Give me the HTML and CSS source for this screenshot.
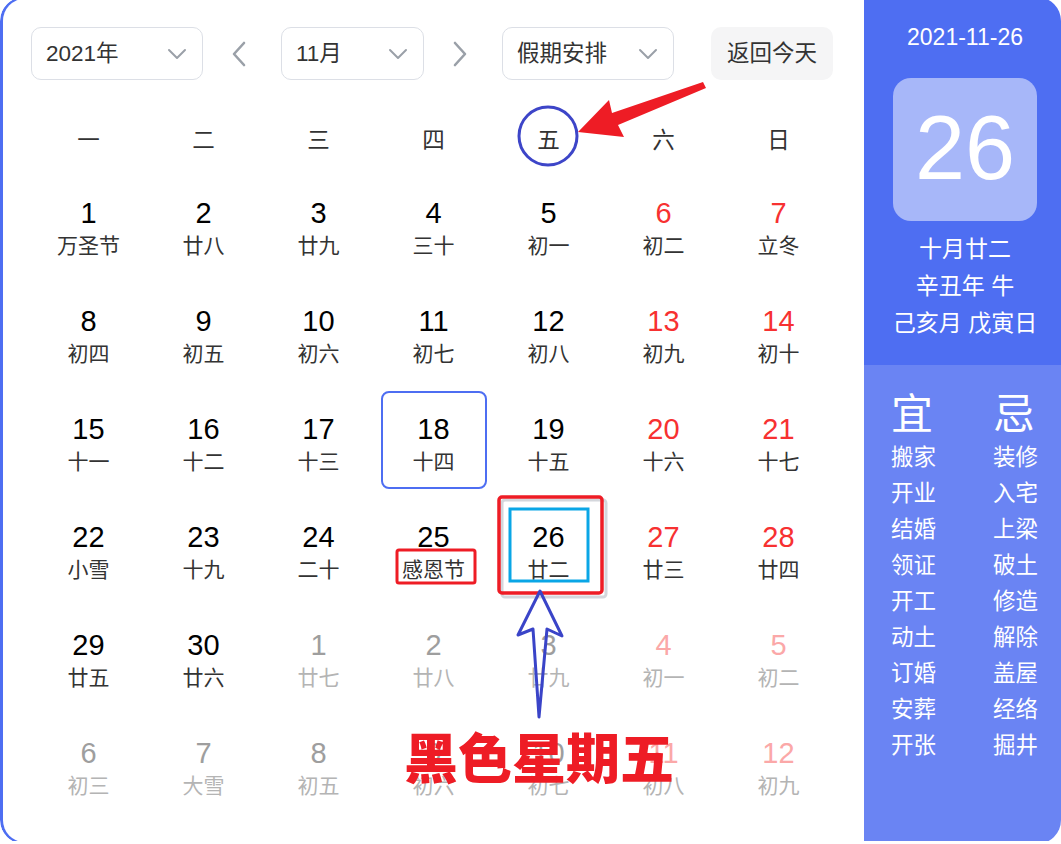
FILE: index.html
```html
<!DOCTYPE html>
<html lang="zh-CN">
<head>
<meta charset="utf-8">
<title>万年历</title>
<link rel="stylesheet" href="styles.css">
</head>
<body>
<div class="page">
  <div class="card">
    <div class="main">
      <div class="toolbar">
        <div class="select sel-year"><span>2021年</span><svg class="chev" width="20" height="12" viewBox="0 0 20 12"><path d="M2 2 L10 10 L18 2"/></svg></div>
        <div class="nav"><svg width="16" height="26" viewBox="0 0 16 26"><path d="M13 2 L3 13 L13 24"/></svg></div>
        <div class="select sel-month"><span>11月</span><svg class="chev" width="20" height="12" viewBox="0 0 20 12"><path d="M2 2 L10 10 L18 2"/></svg></div>
        <div class="nav"><svg width="16" height="26" viewBox="0 0 16 26"><path d="M3 2 L13 13 L3 24"/></svg></div>
        <div class="select sel-holiday"><span>假期安排</span><svg class="chev" width="20" height="12" viewBox="0 0 20 12"><path d="M2 2 L10 10 L18 2"/></svg></div>
        <div class="today-btn"><span>返回今天</span></div>
      </div>

      <div class="week">
        <div>一</div><div>二</div><div>三</div><div>四</div><div>五</div><div>六</div><div>日</div>
      </div>

      <div class="days">
        <div class="cell"><span class="num">1</span><span class="lunar">万圣节</span></div>
        <div class="cell"><span class="num">2</span><span class="lunar">廿八</span></div>
        <div class="cell"><span class="num">3</span><span class="lunar">廿九</span></div>
        <div class="cell"><span class="num">4</span><span class="lunar">三十</span></div>
        <div class="cell"><span class="num">5</span><span class="lunar">初一</span></div>
        <div class="cell weekend"><span class="num">6</span><span class="lunar">初二</span></div>
        <div class="cell weekend"><span class="num">7</span><span class="lunar">立冬</span></div>

        <div class="cell"><span class="num">8</span><span class="lunar">初四</span></div>
        <div class="cell"><span class="num">9</span><span class="lunar">初五</span></div>
        <div class="cell"><span class="num">10</span><span class="lunar">初六</span></div>
        <div class="cell"><span class="num">11</span><span class="lunar">初七</span></div>
        <div class="cell"><span class="num">12</span><span class="lunar">初八</span></div>
        <div class="cell weekend"><span class="num">13</span><span class="lunar">初九</span></div>
        <div class="cell weekend"><span class="num">14</span><span class="lunar">初十</span></div>

        <div class="cell"><span class="num">15</span><span class="lunar">十一</span></div>
        <div class="cell"><span class="num">16</span><span class="lunar">十二</span></div>
        <div class="cell"><span class="num">17</span><span class="lunar">十三</span></div>
        <div class="cell selected"><span class="num">18</span><span class="lunar">十四</span></div>
        <div class="cell"><span class="num">19</span><span class="lunar">十五</span></div>
        <div class="cell weekend"><span class="num">20</span><span class="lunar">十六</span></div>
        <div class="cell weekend"><span class="num">21</span><span class="lunar">十七</span></div>

        <div class="cell"><span class="num">22</span><span class="lunar">小雪</span></div>
        <div class="cell"><span class="num">23</span><span class="lunar">十九</span></div>
        <div class="cell"><span class="num">24</span><span class="lunar">二十</span></div>
        <div class="cell"><span class="num">25</span><span class="lunar">感恩节</span></div>
        <div class="cell"><span class="num">26</span><span class="lunar">廿二</span></div>
        <div class="cell weekend"><span class="num">27</span><span class="lunar">廿三</span></div>
        <div class="cell weekend"><span class="num">28</span><span class="lunar">廿四</span></div>

        <div class="cell"><span class="num">29</span><span class="lunar">廿五</span></div>
        <div class="cell"><span class="num">30</span><span class="lunar">廿六</span></div>
        <div class="cell other"><span class="num">1</span><span class="lunar">廿七</span></div>
        <div class="cell other"><span class="num">2</span><span class="lunar">廿八</span></div>
        <div class="cell other"><span class="num">3</span><span class="lunar">廿九</span></div>
        <div class="cell other weekend"><span class="num">4</span><span class="lunar">初一</span></div>
        <div class="cell other weekend"><span class="num">5</span><span class="lunar">初二</span></div>

        <div class="cell other"><span class="num">6</span><span class="lunar">初三</span></div>
        <div class="cell other"><span class="num">7</span><span class="lunar">大雪</span></div>
        <div class="cell other"><span class="num">8</span><span class="lunar">初五</span></div>
        <div class="cell other"><span class="num">9</span><span class="lunar">初六</span></div>
        <div class="cell other"><span class="num">10</span><span class="lunar">初七</span></div>
        <div class="cell other weekend"><span class="num">11</span><span class="lunar">初八</span></div>
        <div class="cell other weekend"><span class="num">12</span><span class="lunar">初九</span></div>
      </div>
    </div>

    <aside class="side">
      <div class="side-top">
        <div class="side-date">2021-11-26</div>
        <div class="big-day">26</div>
        <div class="side-lunar">
          <div>十月廿二</div>
          <div>辛丑年 牛</div>
          <div>己亥月 戊寅日</div>
        </div>
      </div>
      <div class="side-bottom">
        <div class="yiji">
          <div class="col">
            <div class="head">宜</div>
            <div>搬家</div><div>开业</div><div>结婚</div><div>领证</div><div>开工</div><div>动土</div><div>订婚</div><div>安葬</div><div>开张</div>
          </div>
          <div class="col">
            <div class="head">忌</div>
            <div>装修</div><div>入宅</div><div>上梁</div><div>破土</div><div>修造</div><div>解除</div><div>盖屋</div><div>经络</div><div>掘井</div>
          </div>
        </div>
      </div>
    </aside>
  </div>

  <svg class="annot" width="1061" height="844" viewBox="0 0 1061 844">
    <circle cx="548" cy="139" r="29" fill="none" stroke="#3d45c8" stroke-width="3"/>
    <polygon points="578,135 609,103 612,116 703,85 706,91 618,128 624,140" fill="#ee1c25"/>
    <rect x="397" y="553" width="78" height="33" rx="2" fill="none" stroke="#ee1c25" stroke-width="3"/>
    <rect x="502" y="503" width="104" height="97" rx="3" fill="none" stroke="#b8bcc4" stroke-width="3" opacity="0.6"/>
    <rect x="499" y="500" width="103" height="96" rx="3" fill="none" stroke="#ee1c25" stroke-width="3.5"/>
    <rect x="510" y="512" width="78" height="72" fill="none" stroke="#0aa6e6" stroke-width="3"/>
    <polygon points="540,594 562,639 547,632 539,720 533,632 518,638" fill="none" stroke="#3a44c8" stroke-width="3" stroke-linejoin="round"/>
  </svg>
  <div class="annot-text">黑色星期五</div>
</div>
</body>
</html>
```

FILE: styles.css
```css
* { box-sizing: border-box; }

html, body {
  margin: 0;
  padding: 0;
  background: #ffffff;
  overflow: hidden;
}

body {
  font-family: "Liberation Sans", Arial, "Noto Sans CJK SC", sans-serif;
  color: #333333;
}

.page {
  position: relative;
  width: 1061px;
  height: 844px;
}

.card {
  display: flex;
  width: 1061px;
  height: 847px;
  margin-top: -3px;
  border-radius: 24px;
  overflow: hidden;
  background: #ffffff;
}

.main {
  width: 864px;
  flex: none;
  border-left: 3px solid #4e6ef2;
  border-top: 2px solid #4e6ef2;
  border-bottom: 2px solid #4e6ef2;
  border-radius: 24px 0 0 24px;
  padding: 28px 0 0 28px;
  background: #ffffff;
}

/* toolbar */
.toolbar {
  display: flex;
  align-items: center;
  height: 53px;
}

.select {
  height: 53px;
  border: 1px solid #dcdfe6;
  border-radius: 10px;
  display: flex;
  align-items: center;
  justify-content: space-between;
  padding: 0 15px 0 14px;
  font-size: 22.5px;
  color: #333333;
  background: #ffffff;
}

.select span,
.today-btn span {
  line-height: 1;
  padding-top: 2px;
}

.sel-year { width: 172px; }
.sel-month { width: 143px; }
.sel-holiday { width: 172px; }

.chev path,
.nav path {
  fill: none;
  stroke: #9aa0a8;
  stroke-width: 2;
  stroke-linecap: round;
  stroke-linejoin: round;
}

.nav path { stroke-width: 2.6; }

.nav {
  width: 78px;
  height: 53px;
  display: flex;
  align-items: center;
  justify-content: center;
  padding-right: 6px;
}

.today-btn {
  margin-left: 37px;
  width: 122px;
  height: 53px;
  border-radius: 10px;
  background: #f5f5f6;
  display: flex;
  align-items: center;
  justify-content: center;
  font-size: 22.5px;
  color: #333333;
}

/* week header */
.week {
  display: grid;
  grid-template-columns: repeat(7, 115px);
  height: 60px;
  margin-top: 30px;
  padding-bottom: 4px;
  align-items: center;
  font-size: 22.5px;
  color: #333333;
  text-align: center;
}

/* days */
.days {
  display: grid;
  grid-template-columns: repeat(7, 115px);
  grid-auto-rows: 108px;
}

.cell {
  margin: 5px 4.5px;
  border: 2px solid transparent;
  border-radius: 8px;
  display: flex;
  flex-direction: column;
  align-items: center;
  padding-top: 19px;
}

.cell .num {
  font-size: 29px;
  line-height: 34px;
  color: #000000;
}

.cell .lunar {
  font-size: 21px;
  line-height: 32px;
  color: #333333;
}

.cell.weekend .num { color: #f73131; }

.cell.other .num { color: #9e9e9e; }
.cell.other .lunar { color: #b4b4b4; }
.cell.other.weekend .num { color: #fba8a8; }

.cell.selected {
  border-color: #4e6ef2;
}

/* side panel */
.side {
  flex: 1;
  display: flex;
  flex-direction: column;
  color: #ffffff;
}

.side-top {
  background: #4e6ef2;
  height: 368px;
  padding: 25px 0 0 5px;
  display: flex;
  flex-direction: column;
  align-items: center;
}

.side-date {
  font-size: 23px;
  line-height: 30px;
}

.big-day {
  margin-top: 26px;
  width: 144px;
  height: 143px;
  border-radius: 18px;
  background: rgba(255, 255, 255, 0.5);
  display: flex;
  align-items: center;
  justify-content: center;
  font-size: 90px;
  line-height: 1;
  padding-bottom: 4px;
}

.side-lunar {
  margin-top: 10px;
  font-size: 23px;
  line-height: 37px;
  text-align: center;
}

.side-bottom {
  flex: 1;
  background: #6a84f3;
  padding: 24px 0 0 5px;
}

.yiji {
  display: flex;
  justify-content: center;
  gap: 56px;
}

.yiji .col {
  width: 46px;
  font-size: 22.5px;
  line-height: 36px;
}

.yiji .head {
  font-size: 42px;
  line-height: 51px;
}

/* annotations over the calendar */
.annot {
  position: absolute;
  left: 0;
  top: 0;
  pointer-events: none;
}

.annot-text {
  position: absolute;
  left: 404px;
  top: 730px;
  font-family: "Noto Sans CJK SC", sans-serif;
  font-size: 54px;
  line-height: 58px;
  font-weight: 900;
  color: #ee1c25;
  white-space: nowrap;
}
```
